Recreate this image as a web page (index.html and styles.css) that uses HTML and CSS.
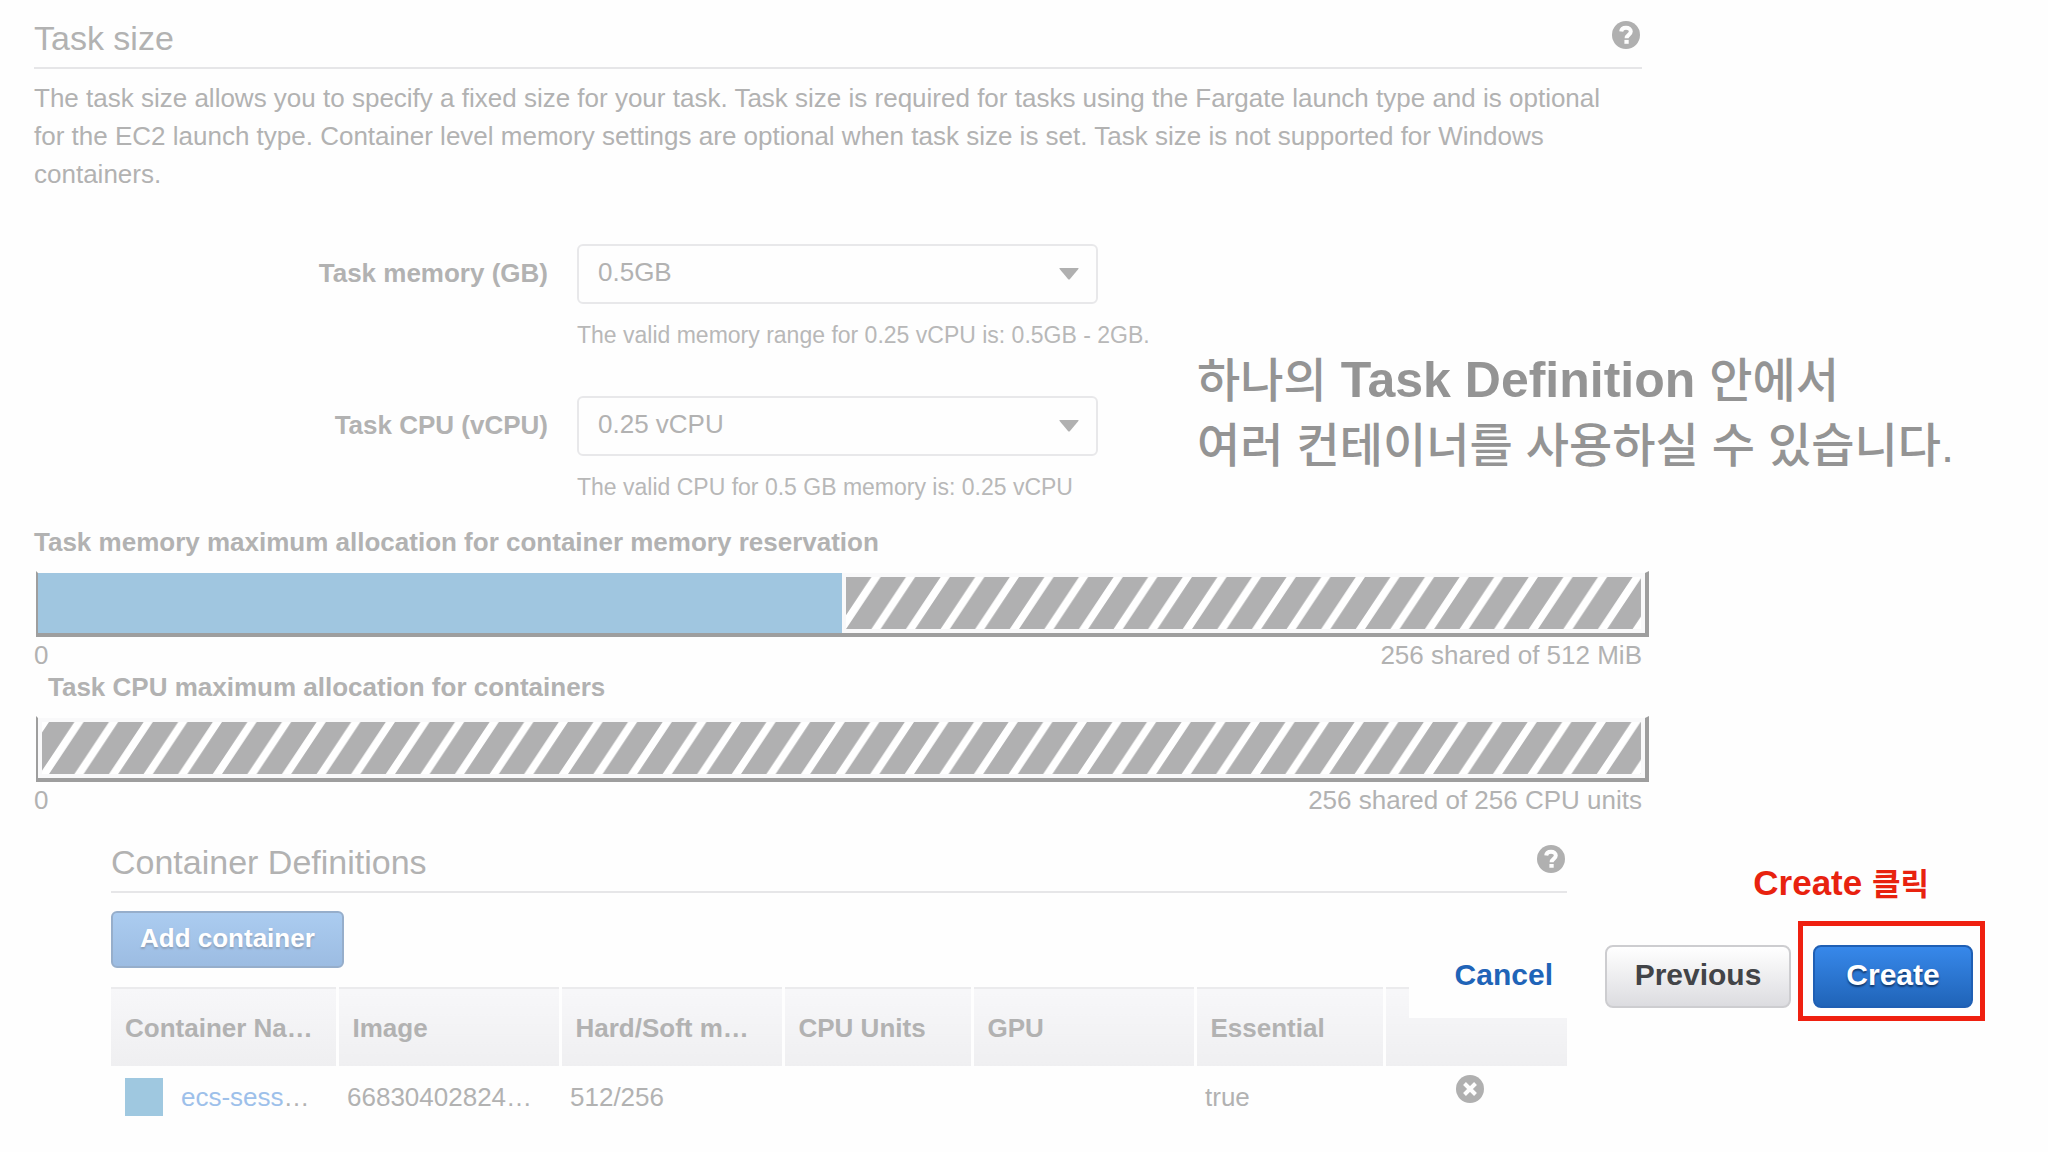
FILE: index.html
```html
<!DOCTYPE html>
<html lang="ko">
<head>
<meta charset="utf-8">
<meta name="viewport" content="width=device-width, initial-scale=1">
<title>Create Task Definition</title>
<link rel="stylesheet" href="styles.css">
</head>
<body>
<main class="page">
  <section class="task" lang="en">
    <header class="section-head">
      <h2>Task size</h2>
      <button class="icon-button" type="button" aria-label="Help: task size">
        <svg class="icon" viewBox="0 0 28 28" aria-hidden="true"><circle cx="14" cy="14" r="14"/><path class="mark" d="M9.2 10.5C9.4 7.8 11.4 6.7 14 6.7c2.700 0 4.800 1.500 4.800 3.900 0 3.300-4.200 3.300-4.200 6.600"/><path class="dot" d="M12.400 18.900h4.300v3.900h-4.300z"/></svg>
      </button>
    </header>
    <p class="intro">The task size allows you to specify a fixed size for your task. Task size is required for tasks using the Fargate launch type and is optional for the EC2 launch type. Container level memory settings are optional when task size is set. Task size is not supported for Windows containers.</p>
  </section>

  <div class="settings">
    <form class="fields" lang="en">
      <label class="field-label" for="memory">Task memory (GB)</label>
      <div class="field">
        <div class="select">
          <select id="memory"><option>0.5GB</option></select>
          <svg class="caret" viewBox="0 0 20 12" aria-hidden="true"><path d="M1 0h18q1 0 .4 1L11 11q-1 1-2 0L.600 1Q0 0 1 0z"/></svg>
        </div>
        <p class="hint">The valid memory range for 0.25 vCPU is: 0.5GB - 2GB.</p>
      </div>
      <label class="field-label" for="cpu">Task CPU (vCPU)</label>
      <div class="field">
        <div class="select">
          <select id="cpu"><option>0.25 vCPU</option></select>
          <svg class="caret" viewBox="0 0 20 12" aria-hidden="true"><path d="M1 0h18q1 0 .4 1L11 11q-1 1-2 0L.600 1Q0 0 1 0z"/></svg>
        </div>
        <p class="hint">The valid CPU for 0.5 GB memory is: 0.25 vCPU</p>
      </div>
    </form>
    <p class="note"><span class="ko">하나의</span> Task Definition <span class="ko">안에서</span><br><span class="ko">여러 컨테이너를 사용하실 수 있습니다.</span></p>
  </div>

  <section class="allocations" lang="en">
    <h3>Task memory maximum allocation for container memory reservation</h3>
    <div class="bar">
      <div class="used" style="width: 50%"></div>
      <div class="shared">
        <svg class="stripes" aria-hidden="true">
          <defs><pattern id="stripe-memory" patternUnits="userSpaceOnUse" width="34.600" height="52"><path d="M0 52 34.600 0h25.400L25.400 52zM-34.600 52 0 0h25.400L-9.200 52z"/></pattern></defs>
          <rect width="100%" height="100%" fill="url(#stripe-memory)"/>
        </svg>
      </div>
    </div>
    <div class="scale"><span>0</span><span>256 shared of 512 MiB</span></div>
    <h3 class="indented">Task CPU maximum allocation for containers</h3>
    <div class="bar">
      <div class="shared">
        <svg class="stripes" aria-hidden="true">
          <defs><pattern id="stripe-cpu" x="7" patternUnits="userSpaceOnUse" width="34.600" height="52"><path d="M0 52 34.600 0h25.400L25.400 52zM-34.600 52 0 0h25.400L-9.200 52z"/></pattern></defs>
          <rect width="100%" height="100%" fill="url(#stripe-cpu)"/>
        </svg>
      </div>
    </div>
    <div class="scale"><span>0</span><span>256 shared of 256 CPU units</span></div>
  </section>

  <div class="lower">
    <section class="containers" lang="en">
      <header class="section-head">
        <h2>Container Definitions</h2>
        <button class="icon-button" type="button" aria-label="Help: container definitions">
          <svg class="icon" viewBox="0 0 28 28" aria-hidden="true"><circle cx="14" cy="14" r="14"/><path class="mark" d="M9.2 10.5C9.4 7.8 11.4 6.7 14 6.7c2.700 0 4.800 1.500 4.800 3.900 0 3.300-4.200 3.300-4.200 6.600"/><path class="dot" d="M12.400 18.900h4.300v3.900h-4.300z"/></svg>
        </button>
      </header>
      <button class="add" type="button">Add container</button>
      <table class="grid">
        <colgroup><col class="c-name"><col class="c-wide"><col class="c-wide"><col class="c-slim"><col class="c-wide"><col class="c-slim"><col></colgroup>
        <thead>
          <tr><th scope="col">Container Na…</th><th scope="col">Image</th><th scope="col">Hard/Soft m…</th><th scope="col">CPU Units</th><th scope="col">GPU</th><th scope="col">Essential</th><th></th></tr>
        </thead>
        <tbody>
          <tr>
            <td><div class="name"><span class="swatch"></span><span><a href="#">ecs-sess</a>…</span></div></td>
            <td>66830402824…</td>
            <td>512/256</td>
            <td></td>
            <td></td>
            <td>true</td>
            <td class="remove">
              <button class="icon-button" type="button" aria-label="Remove container">
                <svg class="icon" viewBox="0 0 28 28" aria-hidden="true"><circle cx="14" cy="14" r="14"/><path class="cross" d="m8.500 8.500 11 11m0-11-11 11"/></svg>
              </button>
            </td>
          </tr>
        </tbody>
      </table>
    </section>

    <div class="actions">
      <button class="cancel" type="button">Cancel</button>
      <button class="previous" type="button">Previous</button>
      <div class="target">
        <span class="callout">Create <span class="ko">클릭</span></span>
        <button class="create" type="button">Create</button>
      </div>
    </div>
  </div>
</main>
</body>
</html>
```
FILE: styles.css
```css
* {
  box-sizing: border-box;
}

body {
  margin: 0;
  background: #fefefe;
  color: #b2b2b2;
  font: 26px/30px "Liberation Sans", "Noto Sans CJK KR", sans-serif;
}

h2,
h3,
p {
  margin: 0;
}

button,
select {
  font: inherit;
  color: inherit;
}

.page {
  padding: 18px 0 0 34px;
}

.task {
  margin-right: 406px;
}

.section-head {
  display: flex;
  justify-content: space-between;
  align-items: flex-start;
  padding: 0 2px 9px 0;
  border-bottom: 2px solid #e6e6e8;
}

.section-head h2 {
  font-size: 34px;
  font-weight: 400;
  line-height: 40px;
}

.icon-button {
  display: block;
  margin-top: 3px;
  padding: 0;
  border: 0;
  background: none;
}

.icon {
  display: block;
  width: 28px;
  height: 28px;
  fill: #b0b0b0;
}

.icon .mark,
.icon .cross {
  fill: none;
  stroke: #fefefe;
  stroke-width: 4;
}

.icon .dot {
  fill: #fefefe;
}

.intro {
  margin-top: 10px;
  padding-right: 30px;
  line-height: 38px;
}

.settings {
  display: flex;
  align-items: flex-start;
  margin-top: 51px;
}

.fields {
  display: grid;
  grid-template-columns: 514px 620px;
  column-gap: 29px;
  row-gap: 47px;
}

.field-label {
  margin-top: 14px;
  text-align: right;
  font-weight: 700;
}

.select {
  display: grid;
  width: 521px;
  align-items: center;
}

.select select,
.caret {
  grid-area: 1 / 1;
}

.select select {
  appearance: none;
  width: 100%;
  height: 60px;
  padding: 0 40px 4px 19px;
  border: 2px solid #e8e8ea;
  border-radius: 6px;
  background: #fefefe;
}

.caret {
  justify-self: end;
  width: 20px;
  height: 12px;
  margin-right: 19px;
  fill: #b0b0b0;
  pointer-events: none;
}

.hint {
  margin-top: 17px;
  font-size: 23px;
  line-height: 28px;
  color: #b8b8b8;
}

.note {
  margin-top: 104px;
  font-size: 50px;
  font-weight: 700;
  line-height: 65px;
  color: #949494;
  white-space: nowrap;
}

.note .ko {
  font-size: 47px;
  font-weight: 500;
  line-height: 47px;
}

.allocations {
  margin: 26px 399px 0 0;
}

.allocations h3 {
  margin-bottom: 14px;
  font-size: 26px;
}

.allocations .indented {
  margin-top: 2px;
  padding-left: 14px;
}

.bar {
  display: flex;
  height: 66px;
  margin-left: 2px;
  border: solid #9e9e9e;
  border-width: 2px 4px 4px 2px;
  border-top-color: transparent;
}

.used {
  background: #a0c6e0;
}

.shared {
  flex: 1;
  border: 4px solid #f9f9fa;
}

.stripes {
  display: block;
  width: 100%;
  height: 100%;
  background: #fff;
  fill: #b0b0b1;
}

.scale {
  display: flex;
  justify-content: space-between;
  margin-top: 3px;
  padding-right: 7px;
}

.lower {
  position: relative;
  margin-top: 27px;
}

.containers {
  margin: 0 481px 0 77px;
}

.add {
  display: block;
  height: 57px;
  margin: 18px 0 19px;
  padding: 0 27px 3px;
  border: 2px solid #96aecb;
  border-radius: 6px;
  background: linear-gradient(#abccf0, #9cbce2);
  color: #fff;
  font-weight: 700;
  text-shadow: 0 2px 2px #8c9fb8;
}

.grid {
  width: 100%;
  table-layout: fixed;
  border-collapse: collapse;
}

.c-name {
  width: 226px;
}

.c-wide {
  width: 223px;
}

.c-slim {
  width: 189px;
}

.grid th,
.grid td {
  text-align: left;
  white-space: nowrap;
}

.grid th {
  height: 78px;
  padding: 0 14px;
  border-top: 2px solid #ebebed;
  border-left: 3px solid #fefefe;
  background: linear-gradient(#f7f7f9, #efeff1);
}

.grid th:first-child {
  border-left: 0;
}

.grid td {
  height: 62px;
  padding: 0 10px;
}

.grid td:first-child {
  padding-left: 14px;
}

.name {
  display: flex;
  align-items: center;
  gap: 18px;
}

.swatch {
  flex: none;
  width: 38px;
  height: 38px;
  background: #9fc8e0;
}

.name a {
  color: #9dc0ea;
  text-decoration: none;
}

.grid .remove {
  padding: 6px 0 0 72px;
  vertical-align: top;
}

/* The action bar floats over the right end of the container table. */
.actions {
  position: absolute;
  top: 98px;
  right: 63px;
  display: flex;
  align-items: flex-start;
  padding: 5px 12px 10px 46px;
  background: #fefefe;
  font-size: 30px;
}

.actions button {
  height: 63px;
  font-weight: 700;
}

.cancel {
  margin-right: 52px;
  padding: 0 0 4px;
  border: 0;
  background: none;
  color: #1f64b8;
}

.previous {
  width: 186px;
  margin-right: 22px;
  padding: 0 0 4px;
  border: 2px solid #cdcdd0;
  border-radius: 8px;
  background: linear-gradient(#fff, #dcdce0);
  color: #424448;
}

.target {
  position: relative;
}

.target::before {
  content: "";
  position: absolute;
  inset: -24px -12px -13px -15px;
  border: 5px solid #ef2010;
}

.create {
  position: relative;
  width: 160px;
  padding: 0 0 4px;
  border: 2px solid #1f5fb4;
  border-radius: 8px;
  background: linear-gradient(#3788ea, #2064b8);
  color: #fff;
  text-shadow: 0 2px 2px #12396d;
}

.callout {
  position: absolute;
  right: 44px;
  bottom: 105px;
  font-size: 35px;
  font-weight: 700;
  line-height: 40px;
  color: #e8220f;
  white-space: nowrap;
}

.callout .ko {
  font-size: 31px;
  line-height: 31px;
}
```
